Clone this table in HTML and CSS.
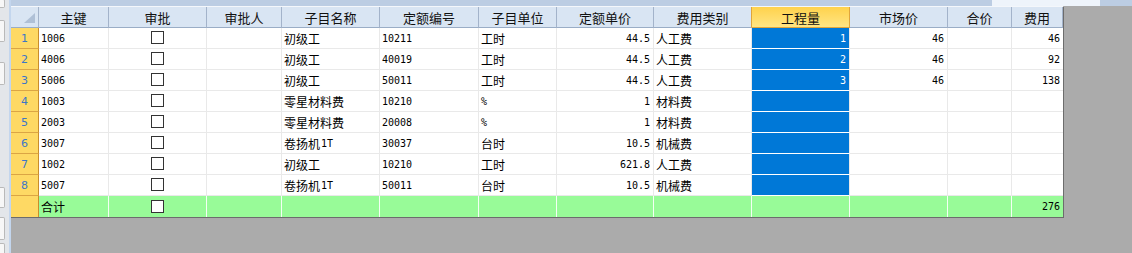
FILE: index.html
```html
<!DOCTYPE html>
<html lang="zh-CN">
<head>
<meta charset="utf-8">
<title>Grid</title>
<link rel="stylesheet" href="styles.css">
</head>
<body>
<div class="side">
  <div class="rail">
    <div class="knob k1"></div>
    <div class="knob k2"></div>
    <div class="knob k3"></div>
    <div class="spacer"></div>
    <div class="knob k4"></div>
    <div class="knob k5"></div>
    <div class="knob k6"></div>
  </div>
  <div class="edge"></div>
</div>
<div class="main">
  <div class="topbar"><div class="tab"></div></div>
  <div class="area">
    <div class="grid">
      <!-- header -->
      <div class="h corner"><span class="tri"></span></div>
      <div class="h">主键</div>
      <div class="h">审批</div>
      <div class="h">审批人</div>
      <div class="h">子目名称</div>
      <div class="h">定额编号</div>
      <div class="h">子目单位</div>
      <div class="h">定额单价</div>
      <div class="h pre">费用类别</div>
      <div class="h hsel">工程量</div>
      <div class="h">市场价</div>
      <div class="h">合价</div>
      <div class="h">费用</div>

      <!-- row 1 -->
      <div class="rh">1</div>
      <div class="c n">1006</div>
      <div class="c m"><span class="cb"></span></div>
      <div class="c"></div>
      <div class="c">初级工</div>
      <div class="c n">10211</div>
      <div class="c">工时</div>
      <div class="c n r">44.5</div>
      <div class="c">人工费</div>
      <div class="c n r sel">1</div>
      <div class="c n r">46</div>
      <div class="c"></div>
      <div class="c n r">46</div>

      <!-- row 2 -->
      <div class="rh">2</div>
      <div class="c n">4006</div>
      <div class="c m"><span class="cb"></span></div>
      <div class="c"></div>
      <div class="c">初级工</div>
      <div class="c n">40019</div>
      <div class="c">工时</div>
      <div class="c n r">44.5</div>
      <div class="c">人工费</div>
      <div class="c n r sel">2</div>
      <div class="c n r">46</div>
      <div class="c"></div>
      <div class="c n r">92</div>

      <!-- row 3 -->
      <div class="rh">3</div>
      <div class="c n">5006</div>
      <div class="c m"><span class="cb"></span></div>
      <div class="c"></div>
      <div class="c">初级工</div>
      <div class="c n">50011</div>
      <div class="c">工时</div>
      <div class="c n r">44.5</div>
      <div class="c">人工费</div>
      <div class="c n r sel">3</div>
      <div class="c n r">46</div>
      <div class="c"></div>
      <div class="c n r">138</div>

      <!-- row 4 -->
      <div class="rh">4</div>
      <div class="c n">1003</div>
      <div class="c m"><span class="cb"></span></div>
      <div class="c"></div>
      <div class="c">零星材料费</div>
      <div class="c n">10210</div>
      <div class="c n">%</div>
      <div class="c n r">1</div>
      <div class="c">材料费</div>
      <div class="c sel"></div>
      <div class="c"></div>
      <div class="c"></div>
      <div class="c"></div>

      <!-- row 5 -->
      <div class="rh">5</div>
      <div class="c n">2003</div>
      <div class="c m"><span class="cb"></span></div>
      <div class="c"></div>
      <div class="c">零星材料费</div>
      <div class="c n">20008</div>
      <div class="c n">%</div>
      <div class="c n r">1</div>
      <div class="c">材料费</div>
      <div class="c sel"></div>
      <div class="c"></div>
      <div class="c"></div>
      <div class="c"></div>

      <!-- row 6 -->
      <div class="rh">6</div>
      <div class="c n">3007</div>
      <div class="c m"><span class="cb"></span></div>
      <div class="c"></div>
      <div class="c">卷扬机<span class="n">1T</span></div>
      <div class="c n">30037</div>
      <div class="c">台时</div>
      <div class="c n r">10.5</div>
      <div class="c">机械费</div>
      <div class="c sel"></div>
      <div class="c"></div>
      <div class="c"></div>
      <div class="c"></div>

      <!-- row 7 -->
      <div class="rh">7</div>
      <div class="c n">1002</div>
      <div class="c m"><span class="cb"></span></div>
      <div class="c"></div>
      <div class="c">初级工</div>
      <div class="c n">10210</div>
      <div class="c">工时</div>
      <div class="c n r">621.8</div>
      <div class="c">人工费</div>
      <div class="c sel"></div>
      <div class="c"></div>
      <div class="c"></div>
      <div class="c"></div>

      <!-- row 8 -->
      <div class="rh">8</div>
      <div class="c n">5007</div>
      <div class="c m"><span class="cb"></span></div>
      <div class="c"></div>
      <div class="c">卷扬机<span class="n">1T</span></div>
      <div class="c n">50011</div>
      <div class="c">台时</div>
      <div class="c n r">10.5</div>
      <div class="c">机械费</div>
      <div class="c sel"></div>
      <div class="c"></div>
      <div class="c"></div>
      <div class="c"></div>

      <!-- total -->
      <div class="rh last"></div>
      <div class="t">合计</div>
      <div class="t m"><span class="cb"></span></div>
      <div class="t"></div>
      <div class="t"></div>
      <div class="t"></div>
      <div class="t"></div>
      <div class="t"></div>
      <div class="t"></div>
      <div class="t"></div>
      <div class="t"></div>
      <div class="t"></div>
      <div class="t n r">276</div>
    </div>
  </div>
</div>
</body>
</html>
```
FILE: styles.css
```css
* { box-sizing: border-box; }

html, body {
  margin: 0;
  padding: 0;
}

body {
  width: 1132px;
  height: 253px;
  overflow: hidden;
  display: flex;
  background: #ababab;
  font-family: "Noto Sans CJK SC", sans-serif;
  font-size: 12px;
  color: #000;
}

/* left docking rail */
.side {
  width: 11px;
  flex: none;
  display: flex;
  height: 253px;
}

.rail {
  width: 9px;
  background: #e3e6ea;
  display: flex;
  flex-direction: column;
}

.edge {
  width: 2px;
  background: #c3d6ee;
}

.knob {
  width: 5px;
  background: #f7f7f7;
  border: 1px solid #b9b9b9;
  border-left: none;
  border-radius: 0 2px 2px 0;
}

.k1 { height: 9px; margin-top: -1px; }
.k2 { height: 22px; margin-top: 12px; }
.k3 { height: 23px; margin-top: 20px; }
.spacer { flex: 1; }
.k4 { height: 21px; }
.k5 { height: 23px; margin-top: 9px; }
.k6 { height: 12px; margin-top: 3px; margin-bottom: -2px; }

/* main area */
.main {
  flex: 1;
  display: flex;
  flex-direction: column;
}

.topbar {
  height: 6px;
  background: #bccde3;
  display: flex;
  justify-content: flex-end;
  padding-right: 32px;
}

.topbar .tab {
  width: 108px;
  background: #eef4fb;
}

.area {
  flex: 1;
  background: #ababab;
}

.grid {
  display: grid;
  grid-template-columns: 28px 70px 98px 75px 98px 99px 78px 97px 98px 98px 98px 64px 51px;
  grid-auto-rows: 21px;
  width: max-content;
  border-top: 1px solid #f4f7fb;
  border-right: 1px solid #6c6c6c;
  border-bottom: 1px solid #6c6c6c;
  background: #fff;
}

/* header */
.h {
  background: #d9e5f3;
  border-right: 1px solid #a3b3ca;
  border-bottom: 1px solid #9aadc6;
  display: flex;
  align-items: center;
  justify-content: center;
  font-size: 13px;
  color: #111;
  white-space: nowrap;
}

.h:last-child { border-right: none; }

.corner {
  position: relative;
}

.tri {
  position: absolute;
  right: 3px;
  bottom: 4px;
  width: 11px;
  height: 10px;
  background: #afc0d6;
  clip-path: polygon(100% 0, 100% 100%, 0 100%);
}

.h.pre { border-right-color: #e0a53b; }

.h.hsel {
  background: linear-gradient(#ffd24c, #ffe584);
  border-right-color: #e0a53b;
  border-bottom-color: #e0a53b;
}

/* row header */
.rh {
  background: #fed964;
  border-right: 1px solid #c98d2c;
  border-bottom: 1px solid #dba544;
  display: flex;
  align-items: center;
  justify-content: center;
  font-family: "DejaVu Sans", sans-serif;
  font-size: 11px;
  color: #3c76c8;
}

.rh.last { border-bottom: none; }

/* cells */
.c, .t {
  display: flex;
  align-items: center;
  padding: 0 3px 0 2px;
  border-right: 1px solid #e9e9e9;
  border-bottom: 1px solid #e9e9e9;
  white-space: nowrap;
  overflow: hidden;
}

.c:nth-child(13n) { border-right: none; }

.n {
  font-family: "DejaVu Sans Mono", monospace;
  font-size: 10px;
}

.c .n { padding-left: 1px; }

.r { justify-content: flex-end; }
.m { justify-content: center; }

.sel {
  background: #0078d7;
  color: #fff;
  border-bottom-color: #fff;
}

.t {
  background: #98fb98;
  border-right-color: #f4fff4;
  border-bottom: none;
}

.t:last-child { border-right: none; }

.cb {
  width: 13px;
  height: 13px;
  border: 1px solid #333;
  background: #fff;
  margin-top: -1px;
}
```
